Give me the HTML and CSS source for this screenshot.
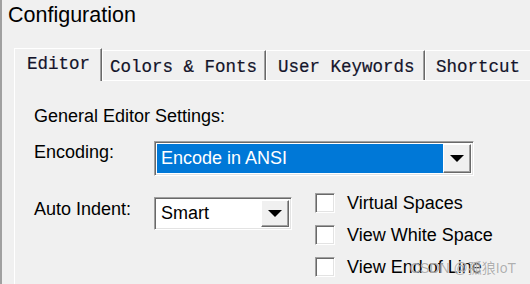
FILE: index.html
```html
<!DOCTYPE html>
<html lang="en">
<head>
  <meta charset="UTF-8" />
  <title>Configuration</title>
  <link rel="stylesheet" href="styles.css">
</head>
<body>
  <div class="window">
    <h1 class="title">Configuration</h1>

    <div class="dialog">
      <div class="tabs">
        <div class="tab tab-active tab-editor">Editor</div>
        <div class="tab tab-colors">Colors &amp; Fonts</div>
        <div class="tab tab-keywords">User Keywords</div>
        <div class="tab tab-shortcut">Shortcut</div>
      </div>

      <div class="panel">
        <p class="group-title">General Editor Settings:</p>

        <div class="row row-encoding">
          <span class="field-label">Encoding:</span>
          <div class="combo combo-wide">
            <div class="combo-value selected">Encode in ANSI</div>
            <div class="combo-btn"><span class="arrow"></span></div>
          </div>
        </div>

        <div class="row row-indent">
          <span class="field-label">Auto Indent:</span>
          <div class="combo combo-narrow">
            <div class="combo-value">Smart</div>
            <div class="combo-btn"><span class="arrow"></span></div>
          </div>
          <ul class="checks">
            <li><span class="checkbox"></span>Virtual Spaces</li>
            <li><span class="checkbox"></span>View White Space</li>
            <li><span class="checkbox"></span>View End of Line</li>
          </ul>
        </div>
      </div>
    </div>

    <div class="watermark">CSDN @孤狼IoT</div>
  </div>
</body>
</html>
```

FILE: styles.css
```css
*, *::before, *::after {
  box-sizing: border-box;
  margin: 0;
  padding: 0;
}
html, body {
  height: 100%;
}
body {
  background: #f0f0f0;
  font-family: "Liberation Sans", Arial, sans-serif;
  color: #000;
  overflow: hidden;
}
.window {
  position: relative;
  height: 100%;
  overflow: hidden;
  border-left: 2px solid #a0a0a0;
}
.title {
  font-size: 21.5px;
  font-weight: 400;
  line-height: 24px;
  padding: 3px 0 0 6px;
}

/* tab strip */
.dialog {
  margin: 21px 0 0 12px;
}
.tabs {
  display: flex;
  align-items: flex-end;
  height: 32px;
}
.tab {
  flex: none;
  height: 30px;
  padding-top: 6px;
  background: #f0f0f0;
  border-top: 1px solid #fff;
  border-left: 1px solid #fff;
  border-right: 1px solid #696969;
  box-shadow: inset -1px 0 #a0a0a0;
  font-family: "Liberation Mono", "Courier New", monospace;
  font-size: 17.5px;
  line-height: 20px;
  color: #14142a;
  -webkit-text-stroke: 0.2px #14142a;
  white-space: nowrap;
}
.tab-active {
  position: relative;
  z-index: 1;
  height: 33px;
  margin-bottom: -1px;
  padding-top: 5px;
}
.tab-editor { width: 88px; padding-left: 12px; }
.tab-colors { width: 164px; padding-left: 7px; }
.tab-keywords { width: 159px; padding-left: 11px; }
.tab-shortcut {
  flex: 1;
  min-width: 0;
  padding-left: 10px;
  border-right: none;
  box-shadow: none;
}

/* page body */
.panel {
  border-top: 1px solid #fff;
  border-left: 1px solid #fff;
  padding: 25px 0 0 19px;
  height: 204px;
}
.group-title {
  font-size: 18px;
  line-height: 20px;
}
.row {
  display: flex;
  align-items: flex-start;
}
.row-encoding { margin-top: 15px; }
.row-indent { margin-top: 21px; }
.field-label {
  width: 120px;
  flex: none;
  font-size: 18px;
  line-height: 20px;
  padding-top: 1px;
}
.row-indent .field-label { padding-top: 2px; }

/* combo boxes */
.combo {
  display: flex;
  flex: none;
  background: #fff;
  border: 1px solid;
  border-color: #a0a0a0 #fff #fff #a0a0a0;
  box-shadow: inset 1px 1px #696969, inset -1px -1px #e3e3e3;
  padding: 2px;
}
.combo-wide { width: 320px; height: 35px; }
.combo-narrow { width: 138px; height: 33px; }
.combo-value {
  flex: 1;
  font-size: 18px;
  line-height: 27px;
  padding-left: 4px;
  white-space: nowrap;
}
.combo-wide .combo-value { line-height: 29px; }
.combo-value.selected {
  background: #0078d7;
  color: #fff;
}
.combo-btn {
  width: 28px;
  flex: none;
  display: flex;
  align-items: center;
  justify-content: center;
  background: #f0f0f0;
  border: 1px solid;
  border-color: #fff #696969 #696969 #fff;
  box-shadow: inset -1px -1px #a0a0a0;
}
.arrow {
  width: 0;
  height: 0;
  border-left: 7px solid transparent;
  border-right: 7px solid transparent;
  border-top: 7px solid #000;
}

/* check boxes */
.checks {
  list-style: none;
  margin: -4px 0 0 23px;
}
.checks li {
  display: flex;
  align-items: center;
  gap: 12px;
  height: 20px;
  margin-bottom: 12px;
  font-size: 18px;
  line-height: 20px;
  white-space: nowrap;
}
.checkbox {
  width: 20px;
  height: 20px;
  flex: none;
  background: #fff;
  border: 1px solid;
  border-color: #a0a0a0 #fff #fff #a0a0a0;
  box-shadow: inset 1px 1px #696969, inset -1px -1px #e3e3e3;
}

.watermark {
  position: absolute;
  right: 14px;
  bottom: 8px;
  font-family: "Liberation Sans", "Noto Sans CJK SC", sans-serif;
  font-size: 14px;
  line-height: 16px;
  color: rgba(150, 150, 150, 0.75);
  text-shadow: 0 0 1px #fff;
}
```
